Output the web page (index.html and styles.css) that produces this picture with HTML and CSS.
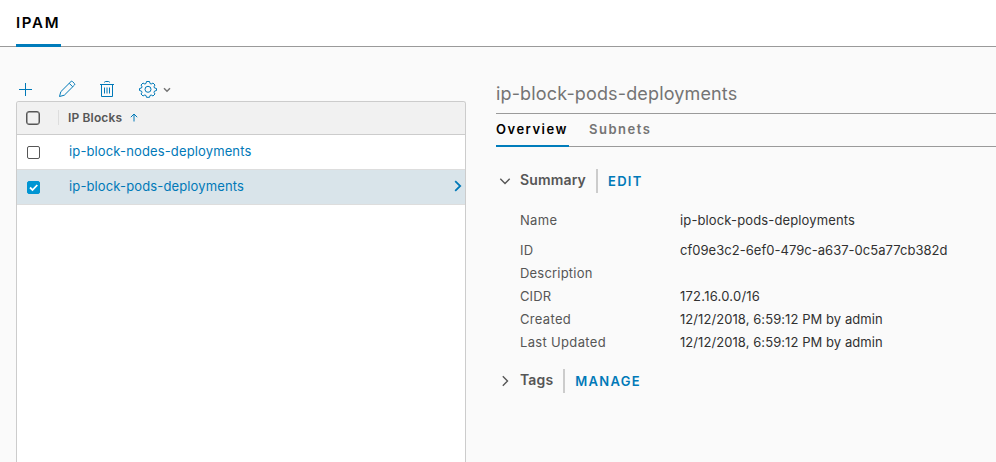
FILE: index.html
```html
<!DOCTYPE html>
<html lang="en">
<head>
<meta charset="utf-8">
<title>IPAM</title>
<link rel="stylesheet" href="styles.css">
</head>
<body>
<header class="topbar"><a class="topbar-tab"><span>IPAM</span></a></header>
<main class="content">
  <section class="list">
    <div class="toolbar">
      <svg class="add" width="14" height="14" viewBox="0 0 14 14"><path d="M7.500 0v13M1 6.500h13"/></svg>
      <svg class="edit" width="18" height="18" viewBox="0 0 18 18"><path d="M1.500 16.500l1.300-4.800L13 1.500q.7-.6 1.400 0l2.100 2.100q.6.700 0 1.400L6.300 15.200zM11.200 3.300l3.500 3.500"/></svg>
      <svg class="trash" width="16" height="18" viewBox="0 0 16 18"><path d="M1 4.500h14M2.500 4.500v12h11v-12M5.500 2.500q0-1 1-1h3q1 0 1 1M5.500 7.500v6M8 7.500v6M10.500 7.500v6"/></svg>
      <svg class="gear" width="18" height="18" viewBox="0 0 18 18"><path d="M7.500 1.500h3l.5 2 1.200.5 1.800-1 2 2-1 1.800.5 1.200 2 .5v2l-2 .6-.5 1.200 1 1.700-2 2-1.800-1-1.200.5-.5 1.800h-3l-.5-1.800-1.200-.5-1.800 1-2-2 1-1.700-.5-1.200-2-.6v-2l2-.5.5-1.200-1-1.800 2-2 1.800 1 1.200-.5z"/><circle cx="9" cy="9.300" r="3"/></svg>
      <svg class="caret" width="8" height="6" viewBox="0 0 8 6"><path d="M1 1.200l3 3 3-3"/></svg>
    </div>
    <div class="grid">
      <div class="grid-head">
        <span class="check check-all"></span>
        <span class="column-name">IP Blocks</span>
        <svg class="sort" width="8" height="9" viewBox="0 0 8 9"><path d="M4 8.500V1M.8 4.200L4 1l3.200 3.200"/></svg>
      </div>
      <div class="grid-row">
        <span class="check"></span><a class="link">ip-block-nodes-deployments</a>
      </div>
      <div class="grid-row selected">
        <span class="check checked"><svg width="13" height="13" viewBox="0 0 13 13"><path d="M3 6.500l2.500 2.500 4.800-5"/></svg></span><a class="link">ip-block-pods-deployments</a>
        <svg class="open" width="8" height="12" viewBox="0 0 8 12"><path d="M1.200 1.200L6.200 6l-5 4.800"/></svg>
      </div>
    </div>
  </section>
  <section class="detail">
    <h1>ip-block-pods-deployments</h1>
    <nav class="tabs"><a class="tab active">Overview</a><a class="tab">Subnets</a></nav>
    <div class="section-head summary">
      <svg class="twisty" width="12" height="12" viewBox="0 0 12 12"><path d="M1.300 3.800L6 8.500l4.700-4.700"/></svg>
      <h2>Summary</h2><a class="action">EDIT</a>
    </div>
    <dl class="facts">
      <div class="fact first"><dt>Name</dt><dd class="v-name">ip-block-pods-deployments</dd></div>
      <div class="fact"><dt>ID</dt><dd class="v-id">cf09e3c2-6ef0-479c-a637-0c5a77cb382d</dd></div>
      <div class="fact"><dt class="k-desc">Description</dt><dd></dd></div>
      <div class="fact"><dt class="k-cidr">CIDR</dt><dd class="v-cidr">172.16.0.0/16</dd></div>
      <div class="fact"><dt>Created</dt><dd class="v-date">12/12/2018, 6:59:12 PM by admin</dd></div>
      <div class="fact"><dt>Last Updated</dt><dd class="v-date">12/12/2018, 6:59:12 PM by admin</dd></div>
    </dl>
    <div class="section-head tags">
      <svg class="twisty" width="12" height="12" viewBox="0 0 12 12"><path d="M3.800 1.300L8.500 6l-4.700 4.700"/></svg>
      <h2>Tags</h2><a class="action">MANAGE</a>
    </div>
  </section>
</main>
</body>
</html>
```
FILE: styles.css
```css
* { box-sizing: border-box; }
body {
  margin: 0;
  height: 462px;
  overflow: hidden;
  display: flex;
  flex-direction: column;
  background: #fafafa;
  color: #313131;
  font: 13px/20px Metropolis, Inter, "Open Sans", sans-serif;
}
svg { display: block; flex: none; fill: none; stroke: #0079b8; stroke-width: 1; }
h1, h2, dl, dd { margin: 0; font-weight: 400; }
a, span, dt, dd, h1, h2 { white-space: nowrap; }

.topbar { height: 47px; flex: none; padding-left: 16px; display: flex; background: #fff; border-bottom: 1px solid #9a9a9a; }
.topbar-tab {
  width: 45px; height: 47px; padding: 13px 0 0 0;
  border-bottom: 3px solid #007cbb;
  color: #000; font-size: 15px; font-weight: 600; letter-spacing: 1.7px;
}

.content { flex: 1; min-height: 0; display: flex; gap: 30px; padding-left: 16px; }
.list { width: 450px; flex: none; display: flex; flex-direction: column; padding-top: 33px; }
.toolbar { height: 21px; flex: none; display: flex; align-items: flex-start; }
.toolbar .add { margin: 3px 0 0 2px; }
.edit { margin-left: 26px; }
.trash { margin-left: 23px; }
.gear { margin-left: 24px; }
.caret { margin: 7px 0 0 6px; stroke: #747474; stroke-width: 1.5; }

.grid { flex: 1; background: #fff; border: 1px solid #ccc; border-bottom: 0; border-radius: 3px 3px 0 0; overflow: hidden; }
.grid-head { height: 33px; display: flex; align-items: center; padding: 0 0 1px 9px; background: #f1f1f1; border-bottom: 1px solid #ccc; }
.check { flex: none; width: 13px; height: 13px; border: 1px solid #565656; border-radius: 2px; background: #fff; }
.check-all { width: 14px; height: 14px; border-radius: 3px; background: #f1f1f1; box-shadow: inset 0 0 0 .5px #565656; }
.column-name { margin-left: 18px; padding-left: 9px; border-left: 1px solid #ddd; line-height: 15px; font-size: 12px; font-weight: 600; letter-spacing: .15px; color: #565656; }
.sort { margin-left: 8px; }
.grid-row { height: 35px; display: flex; align-items: center; padding: 0 3px 0 10px; border-bottom: 1px solid #ddd; }
.selected { background: #d9e4ea; }
.checked { background: #0095d3; border-color: #0095d3; }
.checked svg { margin: -1px; stroke: #fff; stroke-width: 1.8; }
.link { margin-left: 29px; padding-bottom: 2px; letter-spacing: .135px; color: #0079b8; }
.open { margin: 0 0 2px auto; stroke-width: 1.8; }

.detail { flex: 1; }
h1 { height: 67px; padding-top: 34px; border-bottom: 1px solid #9a9a9a; font-size: 18px; line-height: 26px; letter-spacing: .15px; color: #747474; }
.tabs { height: 33px; display: flex; gap: 20px; border-bottom: 1px solid #9a9a9a; }
.tab { height: 33px; padding-top: 5px; font-weight: 600; letter-spacing: 1.5px; color: #747474; }
.tab.active { width: 73px; color: #000; border-bottom: 2px solid #007cbb; }
.section-head { height: 24px; display: flex; align-items: center; padding-left: 3px; }
.twisty { stroke: #565656; stroke-width: 1.4; }
h2 { margin-left: 9px; padding-bottom: 2px; font-size: 14px; line-height: 22px; font-weight: 600; letter-spacing: .15px; color: #565656; }
.action { height: 24px; margin-left: 10px; padding: 2px 0 0 10px; border-left: 2px solid #ccc; color: #0079b8; font-weight: 600; letter-spacing: 1.3px; }
.summary { margin-top: 22px; }
.facts { padding: 16px 0 0 24px; }
.fact { height: 23px; display: flex; line-height: 23px; }
.fact.first { height: 30px; }
dt { width: 160px; color: #565656; letter-spacing: .33px; }
.k-desc { letter-spacing: .2px; }
.k-cidr { letter-spacing: .1px; }
.v-name { letter-spacing: .135px; }
.v-id { letter-spacing: .03px; }
.v-cidr { letter-spacing: .24px; }
.v-date { letter-spacing: .07px; }
.tags { margin-top: 15px; }
```
